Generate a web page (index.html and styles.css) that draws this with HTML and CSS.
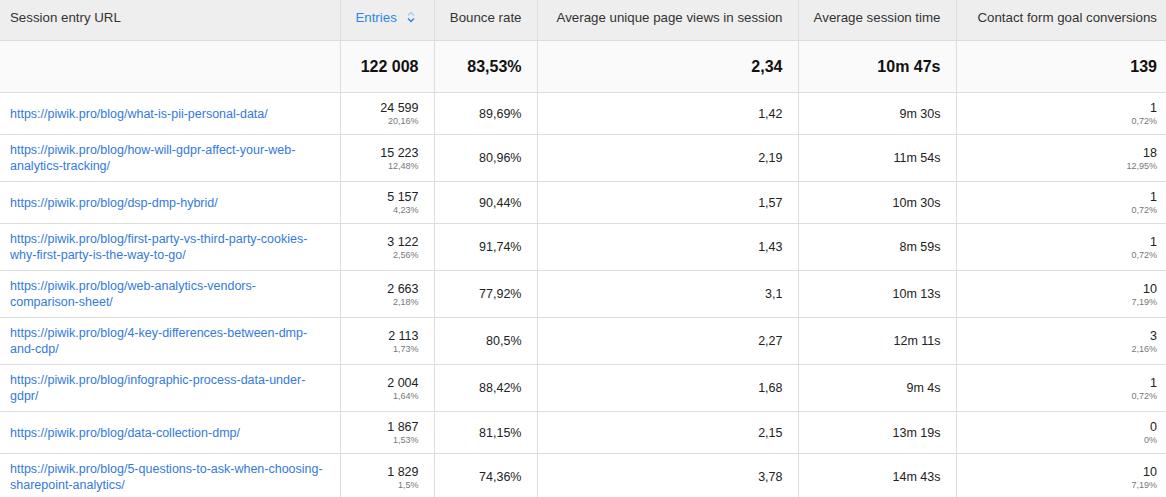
FILE: index.html
```html
<!DOCTYPE html>
<html>
<head>
<meta charset="utf-8">
<link rel="stylesheet" href="styles.css">
</head>
<body>
<div class="wrap">
<table class="report">
  <colgroup>
    <col class="c-url"><col class="c-entries"><col class="c-bounce"><col class="c-views"><col class="c-time"><col class="c-goal">
  </colgroup>
  <thead>
    <tr>
      <th class="left">Session entry URL</th>
      <th class="sorted">Entries <svg class="sort" width="8" height="12" viewBox="0 0 8 12"><path d="M1 4.5 L4 1.5 L7 4.5" fill="none" stroke="#a9cdf3" stroke-width="1.4"/><path d="M1 7.5 L4 10.5 L7 7.5" fill="none" stroke="#2b87e8" stroke-width="1.4"/></svg></th>
      <th>Bounce rate</th>
      <th>Average unique page views in session</th>
      <th>Average session time</th>
      <th>Contact form goal conversions</th>
    </tr>
  </thead>
  <tbody>
    <tr class="totals">
      <td></td>
      <td>122 008</td>
      <td>83,53%</td>
      <td>2,34</td>
      <td>10m 47s</td>
      <td>139</td>
    </tr>
    <tr>
      <td class="left"><a href="#">https://piwik.pro/blog/what-is-pii-personal-data/</a></td>
      <td><span class="num">24 599</span><span class="pct">20,16%</span></td>
      <td>89,69%</td><td>1,42</td><td>9m 30s</td>
      <td><span class="num">1</span><span class="pct">0,72%</span></td>
    </tr>
    <tr>
      <td class="left"><a href="#">https://piwik.pro/blog/how-will-gdpr-affect-your-web-analytics-tracking/</a></td>
      <td><span class="num">15 223</span><span class="pct">12,48%</span></td>
      <td>80,96%</td><td>2,19</td><td>11m 54s</td>
      <td><span class="num">18</span><span class="pct">12,95%</span></td>
    </tr>
    <tr>
      <td class="left"><a href="#">https://piwik.pro/blog/dsp-dmp-hybrid/</a></td>
      <td><span class="num">5 157</span><span class="pct">4,23%</span></td>
      <td>90,44%</td><td>1,57</td><td>10m 30s</td>
      <td><span class="num">1</span><span class="pct">0,72%</span></td>
    </tr>
    <tr>
      <td class="left"><a href="#">https://piwik.pro/blog/first-party-vs-third-party-cookies-why-first-party-is-the-way-to-go/</a></td>
      <td><span class="num">3 122</span><span class="pct">2,56%</span></td>
      <td>91,74%</td><td>1,43</td><td>8m 59s</td>
      <td><span class="num">1</span><span class="pct">0,72%</span></td>
    </tr>
    <tr>
      <td class="left"><a href="#">https://piwik.pro/blog/web-analytics-vendors-comparison-sheet/</a></td>
      <td><span class="num">2 663</span><span class="pct">2,18%</span></td>
      <td>77,92%</td><td>3,1</td><td>10m 13s</td>
      <td><span class="num">10</span><span class="pct">7,19%</span></td>
    </tr>
    <tr>
      <td class="left"><a href="#">https://piwik.pro/blog/4-key-differences-between-dmp-and-cdp/</a></td>
      <td><span class="num">2 113</span><span class="pct">1,73%</span></td>
      <td>80,5%</td><td>2,27</td><td>12m 11s</td>
      <td><span class="num">3</span><span class="pct">2,16%</span></td>
    </tr>
    <tr>
      <td class="left"><a href="#">https://piwik.pro/blog/infographic-process-data-under-gdpr/</a></td>
      <td><span class="num">2 004</span><span class="pct">1,64%</span></td>
      <td>88,42%</td><td>1,68</td><td>9m 4s</td>
      <td><span class="num">1</span><span class="pct">0,72%</span></td>
    </tr>
    <tr>
      <td class="left"><a href="#">https://piwik.pro/blog/data-collection-dmp/</a></td>
      <td><span class="num">1 867</span><span class="pct">1,53%</span></td>
      <td>81,15%</td><td>2,15</td><td>13m 19s</td>
      <td><span class="num">0</span><span class="pct">0%</span></td>
    </tr>
    <tr>
      <td class="left"><a href="#">https://piwik.pro/blog/5-questions-to-ask-when-choosing-sharepoint-analytics/</a></td>
      <td><span class="num">1 829</span><span class="pct">1,5%</span></td>
      <td>74,36%</td><td>3,78</td><td>14m 43s</td>
      <td><span class="num">10</span><span class="pct">7,19%</span></td>
    </tr>
  </tbody>
</table>
</div>
</body>
</html>
```

FILE: styles.css
```css
html, body {
  margin: 0;
  padding: 0;
  background: #ffffff;
}
.wrap {
  width: 1166px;
  height: 497px;
  overflow: hidden;
}
.report {
  width: 1166px;
  table-layout: fixed;
  border-collapse: collapse;
  font-family: "Liberation Sans", Arial, sans-serif;
  font-size: 12.5px;
  color: #222222;
}
.c-url { width: 340px; }
.c-entries { width: 94px; }
.c-bounce { width: 103px; }
.c-views { width: 261px; }
.c-time { width: 158px; }
.c-goal { width: 210px; }

.report th,
.report td {
  border: 1px solid #dddddd;
  text-align: right;
  padding: 7px 15px 7px 10px;
  line-height: 16px;
  vertical-align: middle;
}
.report tr > :first-child { border-left: none; }
.report tr > :last-child { border-right: none; padding-right: 9px; }
.report thead tr th { border-top: none; }

.report th {
  background: #eeeeee;
  font-weight: normal;
  font-size: 13.3px;
  color: #333333;
  height: 26px;
  padding-top: 5px;
  padding-bottom: 9px;
  white-space: nowrap;
}
.report th.sorted {
  color: #2b87e8;
  padding-right: 19px;
}
.sort {
  display: inline-block;
  vertical-align: -1px;
  margin-left: 6px;
}
.report .left {
  text-align: left;
  padding-left: 10px;
  padding-right: 15px;
}
.totals td {
  background: #fafafa;
  font-weight: bold;
  font-size: 16px;
  color: #111111;
  height: 37px;
  padding-top: 7px;
  padding-bottom: 7px;
}
.report td a {
  color: #3579dc;
  text-decoration: none;
}
.report tbody tr:not(.totals) td {
  height: 27px;
}
.num {
  display: block;
  line-height: 16px;
}
.pct {
  display: block;
  font-size: 9px;
  line-height: 11px;
  color: #777777;
}
```
